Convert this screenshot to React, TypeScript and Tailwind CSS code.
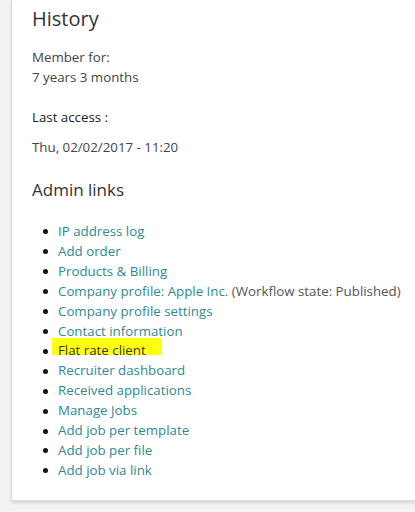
import React from "react";

const links: { label: string; note?: string; highlight?: boolean }[] = [
  { label: "IP address log" },
  { label: "Add order" },
  { label: "Products & Billing" },
  { label: "Company profile: Apple Inc.", note: " (Workflow state: Published)" },
  { label: "Company profile settings" },
  { label: "Contact information" },
  { label: "Flat rate client", highlight: true },
  { label: "Recruiter dashboard" },
  { label: "Received applications" },
  { label: "Manage Jobs" },
  { label: "Add job per template" },
  { label: "Add job per file" },
  { label: "Add job via link" },
];

const App: React.FC = () => {
  return (
    <div
      className="h-[512px] w-[415px] overflow-hidden bg-[#f3f3f3] pl-[11px]"
      style={{ fontFamily: '"Open Sans", "Liberation Sans", sans-serif' }}
    >
      <div className="h-[501px] w-[420px] border-l border-b border-[#dcdcdc] bg-white pl-[20px] pt-[7px] shadow-[0_2px_3px_rgba(0,0,0,0.12)]">
        {/* HISTORY */}
        <h2 className="text-[20px] leading-[24px] text-[#333]">History</h2>

        <div className="mt-[16px] text-[13.3px] leading-[20px] text-[#444]">
          <p>Member for:</p>
          <p>7 years 3 months</p>
        </div>

        <p className="mt-[20px] text-[13.3px] leading-[20px] text-[#222]">Last access :</p>
        <p className="mt-[10px] text-[13.3px] leading-[20px] text-[#444]">
          Thu, 02/02/2017 - 11:20
        </p>

        {/* ADMIN LINKS */}
        <h3 className="mt-[21px] text-[17px] leading-[24px] text-[#333]">Admin links</h3>

        <ul className="mt-[20px] text-[13.3px] leading-[19.9px]">
          {links.map((l) => (
            <li key={l.label} className="flex items-center">
              <span className="ml-[11px] h-[5px] w-[5px] rounded-full bg-[#111]" />
              <span className="relative ml-[10px]">
                {l.highlight && (
                  <span className="absolute left-[-6px] top-[-3px] h-[17px] w-[110px] bg-[#ffff14]" />
                )}
                <a
                  href="#"
                  className={`relative ${l.highlight ? "text-[#3a3a1a]" : "text-[#2f8a92]"}`}
                >
                  {l.label}
                </a>
                {l.note && <span className="text-[#555]">{l.note}</span>}
              </span>
            </li>
          ))}
        </ul>
      </div>
    </div>
  );
};

export default App;
